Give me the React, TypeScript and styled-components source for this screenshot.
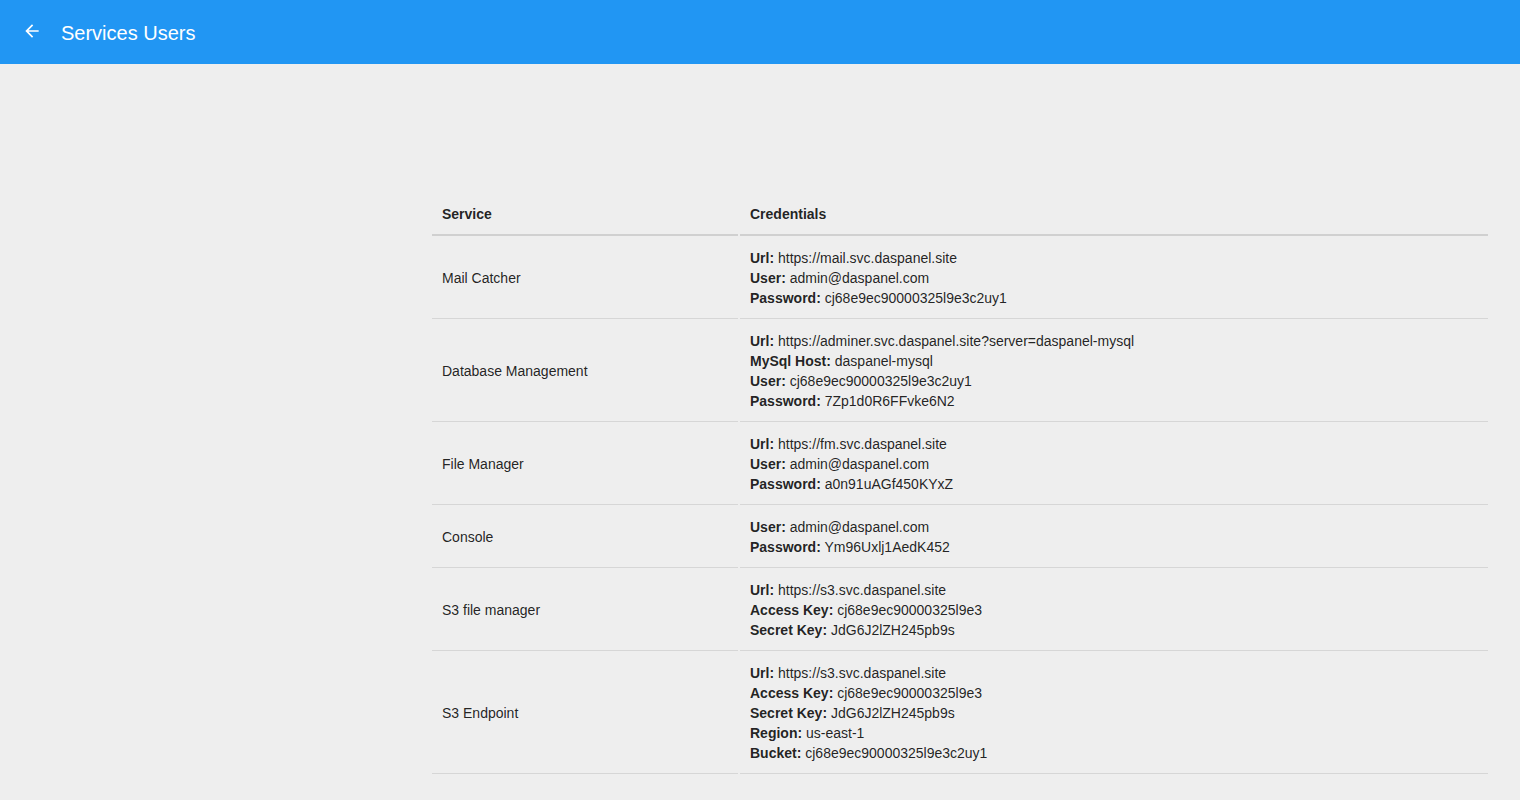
import styled, { createGlobalStyle } from "styled-components";
import { MdArrowBack } from "react-icons/md";

const GlobalStyle = createGlobalStyle`
  body {
    margin: 0;
    background: #eeeeee;
    font-family: "Liberation Sans", Arial, sans-serif;
    color: rgba(0, 0, 0, 0.87);
  }
`;

const TopBar = styled.header`
  display: flex;
  align-items: center;
  height: 64px;
  padding: 0 22px;
  background-color: #2196f3;
  color: #ffffff;
`;

const BackButton = styled.button`
  display: flex;
  align-items: center;
  justify-content: center;
  width: 20px;
  height: 20px;
  padding: 0;
  margin: -3px 19px 0 0;
  border: none;
  background: none;
  color: #ffffff;
  cursor: pointer;

  svg {
    width: 20px;
    height: 20px;
  }
`;

const Title = styled.h1`
  margin: 2px 0 0;
  font-size: 20px;
  font-weight: 400;
`;

const Content = styled.main`
  padding: 128px 30px 20px 430px;
`;

const Table = styled.table`
  width: 100%;
  table-layout: fixed;
  border-collapse: separate;
  border-spacing: 2px;
  font-size: 14px;
  line-height: 20px;
`;

const HeadCell = styled.th<{ $width?: number }>`
  width: ${(p) => (p.$width ? `${p.$width}px` : "auto")};
  padding: 10px;
  text-align: left;
  font-weight: 700;
  border-bottom: 2px solid #d0d0d0;
`;

const Cell = styled.td`
  padding: 10px;
  vertical-align: middle;
  border-bottom: 1px solid #d6d6d6;
`;

const Line = styled.div`
  white-space: nowrap;

  b {
    font-weight: 700;
  }
`;

type Row = {
  service: string;
  fields: [string, string][];
};

const rows: Row[] = [
  {
    service: "Mail Catcher",
    fields: [
      ["Url", "https://mail.svc.daspanel.site"],
      ["User", "admin@daspanel.com"],
      ["Password", "cj68e9ec90000325l9e3c2uy1"],
    ],
  },
  {
    service: "Database Management",
    fields: [
      ["Url", "https://adminer.svc.daspanel.site?server=daspanel-mysql"],
      ["MySql Host", "daspanel-mysql"],
      ["User", "cj68e9ec90000325l9e3c2uy1"],
      ["Password", "7Zp1d0R6FFvke6N2"],
    ],
  },
  {
    service: "File Manager",
    fields: [
      ["Url", "https://fm.svc.daspanel.site"],
      ["User", "admin@daspanel.com"],
      ["Password", "a0n91uAGf450KYxZ"],
    ],
  },
  {
    service: "Console",
    fields: [
      ["User", "admin@daspanel.com"],
      ["Password", "Ym96Uxlj1AedK452"],
    ],
  },
  {
    service: "S3 file manager",
    fields: [
      ["Url", "https://s3.svc.daspanel.site"],
      ["Access Key", "cj68e9ec90000325l9e3"],
      ["Secret Key", "JdG6J2lZH245pb9s"],
    ],
  },
  {
    service: "S3 Endpoint",
    fields: [
      ["Url", "https://s3.svc.daspanel.site"],
      ["Access Key", "cj68e9ec90000325l9e3"],
      ["Secret Key", "JdG6J2lZH245pb9s"],
      ["Region", "us-east-1"],
      ["Bucket", "cj68e9ec90000325l9e3c2uy1"],
    ],
  },
];

const App = () => {
  return (
    <>
      <GlobalStyle />
      <TopBar>
        <BackButton aria-label="back">
          <MdArrowBack />
        </BackButton>
        <Title>Services Users</Title>
      </TopBar>
      <Content>
        <Table>
          <thead>
            <tr>
              <HeadCell $width={286}>Service</HeadCell>
              <HeadCell>Credentials</HeadCell>
            </tr>
          </thead>
          <tbody>
            {rows.map((row) => (
              <tr key={row.service}>
                <Cell>{row.service}</Cell>
                <Cell>
                  {row.fields.map(([label, value]) => (
                    <Line key={label}>
                      <b>{label}:</b> {value}
                    </Line>
                  ))}
                </Cell>
              </tr>
            ))}
          </tbody>
        </Table>
      </Content>
    </>
  );
};

export default App;
